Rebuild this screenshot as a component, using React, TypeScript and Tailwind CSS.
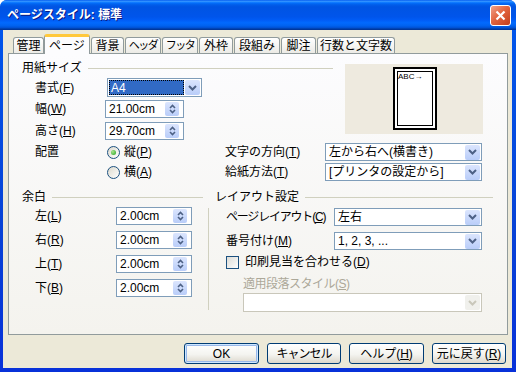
import React from 'react';

const Chevron = ({ color = '#4D6185' }: { color?: string }) => (
    <svg width="9" height="6" viewBox="0 0 9 6">
        <path d="M1 1 L4.5 4.5 L8 1" fill="none" stroke={color} strokeWidth="2" />
    </svg>
);

const Combo: React.FC<{ className: string; text?: string; selected?: boolean; disabled?: boolean }> = ({
    className,
    text,
    selected,
    disabled,
}) => (
    <div
        className={`${className} h-full flex items-center bg-white border ${disabled ? 'border-[#C9C7BA]' : 'border-[#7F9DB9]'}`}
    >
        <div className="flex-1 h-full flex items-center px-[1px] py-[1px]">
            {selected ? (
                <div className="w-full h-full flex items-center pl-[2px] bg-[#316AC5] text-white outline-1 outline-dotted outline-[#000] -outline-offset-1">
                    {text}
                </div>
            ) : (
                <span className="pl-[2px] whitespace-nowrap">{text}</span>
            )}
        </div>
        <div
            className={`w-[15px] h-[15px] mr-px flex items-center justify-center rounded-[2px] ${
                disabled ? 'bg-[#F0F0EC]' : 'bg-[linear-gradient(#dbe5fd,#b9cdf9)]'
            }`}
        >
            <Chevron color={disabled ? '#C9C7BA' : '#4D6185'} />
        </div>
    </div>
);

const Spin: React.FC<{ className: string; text: string }> = ({ className, text }) => (
    <div className={`${className} h-full flex items-center bg-white border border-[#7F9DB9]`}>
        <span className="flex-1 pl-[3px]">{text}</span>
        <div className="w-[14px] h-[14px] mr-[4px] flex items-center justify-center rounded-[2px] bg-[linear-gradient(#dbe5fd,#b9cdf9)]">
            <svg width="7" height="10" viewBox="0 0 7 10">
                <path d="M1 4 L3.5 1.5 L6 4" fill="none" stroke="#4D6185" strokeWidth="1.6" />
                <path d="M1 6 L3.5 8.5 L6 6" fill="none" stroke="#4D6185" strokeWidth="1.6" />
            </svg>
        </div>
    </div>
);

const Mn: React.FC<{ t: string; k: string; className?: string }> = ({ t, k, className = '' }) => (
    <span className={`whitespace-nowrap ${className}`}>
        {t}(<span className="underline underline-offset-1">{k}</span>)
    </span>
);

const Radio = ({ on }: { on?: boolean }) => (
    <div className="w-[13px] h-[13px] rounded-full border border-[#1C5180] bg-[linear-gradient(135deg,#dcd9cd,#ffffff)] flex items-center justify-center">
        {on && <div className="w-[5px] h-[5px] rounded-full bg-[radial-gradient(circle_at_35%_35%,#a7e58a,#21a121)]" />}
    </div>
);

const GroupHead: React.FC<{ title: string; className?: string }> = ({ title, className = '' }) => (
    <div className="h-[14px] flex items-center">
        <span className="whitespace-nowrap">{title}</span>
        <div className={`flex-1 h-px bg-[#D0D0BF] ml-[6px] ${className}`} />
    </div>
);

const Btn: React.FC<{ children: React.ReactNode; def?: boolean; className: string }> = ({ children, def, className }) => (
    <div
        className={`${className} h-[21px] flex items-center justify-center rounded-[3px] border border-[#003C74] bg-[linear-gradient(#ffffff,#f4f4f0_55%,#dcd7cc)] ${
            def ? 'shadow-[inset_0_0_0_1px_#cee7ff,inset_0_0_0_2px_#98b8ea]' : ''
        }`}
    >
        {children}
    </div>
);

const tabs = [
    { t: '管理', w: 'w-[31px]' },
    { t: 'ページ', w: 'w-[46px]', on: true },
    { t: '背景', w: 'w-[33px]' },
    { t: 'ヘッダ', w: 'w-[36px]', k: true },
    { t: 'フッタ', w: 'w-[36px]', k: true },
    { t: '外枠', w: 'w-[34px]' },
    { t: '段組み', w: 'w-[46px]' },
    { t: '脚注', w: 'w-[35px]' },
    { t: '行数と文字数', w: 'w-[78px]' },
];

export default function App() {
    return (
        <div className="w-[516px] h-[372px] flex flex-col rounded-t-[7px] overflow-hidden bg-[linear-gradient(#0058ee,#0843d6_60%,#0831d9)] font-['Liberation_Sans','Noto_Sans_CJK_JP',sans-serif] text-[12px] leading-none text-black">
            {/* title bar */}
            <div className="h-[30px] flex items-center pl-[7px] pr-[5px] bg-[linear-gradient(#0058ee_0%,#3593ff_4%,#288eff_6%,#127dff_8%,#036ffc_10%,#0262ee_14%,#0057e5_20%,#0054e3_24%,#0055eb_56%,#005bf5_66%,#026afe_76%,#0062ef_86%,#0052d6_92%,#0040ab_96%,#003092_100%)]">
                <span className="flex-1 text-white font-bold text-[12px] [text-shadow:1px_1px_0_#0a1883]">
                    ページスタイル: 標準
                </span>
                <div className="w-[21px] h-[21px] rounded-[3px] border border-white bg-[linear-gradient(135deg,#f0a28a,#e2653f_45%,#c43e1a)] flex items-center justify-center">
                    <svg width="11" height="11" viewBox="0 0 11 11">
                        <path d="M1.5 1.5 L9.5 9.5 M9.5 1.5 L1.5 9.5" stroke="#fff" strokeWidth="2.2" />
                    </svg>
                </div>
            </div>

            {/* body */}
            <div className="flex-1 ml-[3px] mr-[4px] mb-[4px] bg-[#ECE9D8] flex flex-col">
                <div className="h-[23px] flex items-end pl-[9px]">
                    {tabs.map((tab) =>
                        tab.on ? (
                            <div
                                key={tab.t}
                                className={`${tab.w} h-[20px] -mb-px relative z-10 flex items-center justify-center whitespace-nowrap rounded-t-[3px] border-x border-[#919B9C] border-t-[3px] border-t-[#FFC83C] bg-[#FCFCFE]`}
                            >
                                {tab.t}
                            </div>
                        ) : (
                            <div
                                key={tab.t}
                                className={`${tab.w} ${tab.k ? 'tracking-[-1.5px] text-[11px]' : ''} h-[16px] ml-px flex items-center justify-center whitespace-nowrap rounded-t-[3px] border border-b-0 border-[#919B9C] bg-[linear-gradient(#ffffff,#ecebe6)]`}
                            >
                                {tab.t}
                            </div>
                        )
                    )}
                </div>

                {/* tab panel */}
                <div className="ml-[5px] w-[500px] h-[282px] border border-[#919B9C] bg-[linear-gradient(#fcfcfe,#f4f3ee)] pl-[13px] pt-[7px]">
                    {/* paper size */}
                    <div className="flex">
                        <div className="w-[323px] flex flex-col">
                            <GroupHead title="用紙サイズ" className="mr-[12px]" />
                            <div className="mt-[3px] h-[19px] flex items-center">
                                <div className="w-[85px] pl-[13px]">
                                    <Mn t="書式" k="F" />
                                </div>
                                <Combo className="w-[95px]" text="A4" selected />
                            </div>
                            <div className="mt-[3px] h-[18px] flex items-center">
                                <div className="w-[83px] pl-[13px]">
                                    <Mn t="幅" k="W" />
                                </div>
                                <Spin className="w-[79px]" text="21.00cm" />
                            </div>
                            <div className="mt-[4px] h-[18px] flex items-center">
                                <div className="w-[83px] pl-[13px]">
                                    <Mn t="高さ" k="H" />
                                </div>
                                <Spin className="w-[79px]" text="29.70cm" />
                            </div>
                        </div>
                        <div className="w-[138px] h-[70px] mt-[3px] bg-[#EEEADF] flex justify-center pt-[3px]">
                            <div className="ml-[2px] w-[44px] h-[63px] border-2 border-black bg-white p-[2px]">
                                <div className="w-full h-full border border-black flex items-start">
                                    <span className="text-[8px] leading-[10px] font-['Liberation_Sans',sans-serif] whitespace-nowrap">
                                        ABC→
                                    </span>
                                </div>
                            </div>
                        </div>
                    </div>

                    <div className="mt-[3px] flex flex-col gap-[2px]">
                        <div className="h-[18px] flex items-center">
                            <div className="w-[85px] pl-[13px]">配置</div>
                            <Radio on />
                            <span className="ml-[4px] w-[101px]">
                                <Mn t="縦" k="P" />
                            </span>
                            <div className="w-[100px]">
                                <Mn t="文字の方向" k="T" />
                            </div>
                            <Combo className="w-[157px]" text="左から右へ(横書き)" />
                        </div>
                        <div className="h-[18px] flex items-center">
                            <div className="w-[85px]" />
                            <Radio />
                            <span className="ml-[4px] w-[101px]">
                                <Mn t="横" k="A" />
                            </span>
                            <div className="w-[100px]">
                                <Mn t="給紙方法" k="T" />
                            </div>
                            <Combo className="w-[157px]" text="[プリンタの設定から]" />
                        </div>
                    </div>

                    {/* margins + layout */}
                    <div className="mt-[9px] flex">
                        <div className="w-[186px] flex flex-col">
                            <GroupHead title="余白" className="mr-[5px]" />
                            <div className="mt-[3px] flex flex-col gap-[6px]">
                                {[
                                    ['左', 'L'],
                                    ['右', 'R'],
                                    ['上', 'T'],
                                    ['下', 'B'],
                                ].map(([t, k]) => (
                                    <div key={k} className="h-[18px] flex items-center">
                                        <div className="w-[94px] pl-[13px]">
                                            <Mn t={t} k={k} />
                                        </div>
                                        <Spin className="w-[76px]" text="2.00cm" />
                                    </div>
                                ))}
                            </div>
                        </div>
                        <div className="w-px h-[102px] mt-[18px] bg-[#D0D0BF]" />
                        <div className="ml-[6px] w-[278px] flex flex-col">
                            <GroupHead title="レイアウト設定" />
                            <div className="mt-[4px] h-[18px] flex items-center">
                                <div className="w-[119px] pl-[11px]">
                                    <Mn t="ページレイアウト" k="C" className="tracking-[-1.2px]" />
                                </div>
                                <Combo className="w-[148px]" text="左右" />
                            </div>
                            <div className="mt-[6px] h-[18px] flex items-center">
                                <div className="w-[119px] pl-[11px]">
                                    <Mn t="番号付け" k="M" />
                                </div>
                                <Combo className="w-[148px]" text="1, 2, 3, ..." />
                            </div>
                            <div className="mt-[5px] h-[14px] flex items-center pl-[11px]">
                                <div className="w-[13px] h-[13px] border border-[#1C5180] bg-[linear-gradient(135deg,#dcdcd7,#ffffff)]" />
                                <span className="ml-[6px]">
                                    <Mn t="印刷見当を合わせる" k="D" />
                                </span>
                            </div>
                            <div className="mt-[8px] h-[14px] flex items-center pl-[28px] text-[#ACA899]">
                                <Mn t="適用段落スタイル" k="S" className="tracking-[-0.5px]" />
                            </div>
                            <div className="mt-[2px] ml-[28px] h-[19px]">
                                <Combo className="w-[239px]" disabled />
                            </div>
                        </div>
                    </div>
                </div>

                {/* buttons */}
                <div className="mt-[8px] flex justify-end gap-[8px] pr-[6px]">
                    <Btn className="w-[75px]" def>
                        OK
                    </Btn>
                    <Btn className="w-[74px]">
                        <span className="tracking-[-1px]">キャンセル</span>
                    </Btn>
                    <Btn className="w-[75px]">
                        <Mn t="ヘルプ" k="H" />
                    </Btn>
                    <Btn className="w-[74px]">
                        <Mn t="元に戻す" k="R" />
                    </Btn>
                </div>
            </div>
        </div>
    );
}
